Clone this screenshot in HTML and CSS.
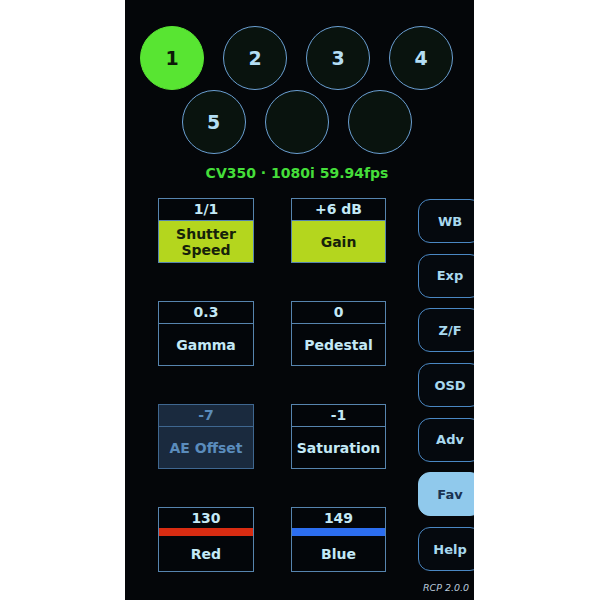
FILE: index.html
```html
<!DOCTYPE html>
<html>
<head>
<meta charset="utf-8">
<link rel="stylesheet" href="styles.css">
</head>
<body>
<div class="panel">
  <div class="cams">
    <div class="cam-row">
      <div class="cam active">1</div>
      <div class="cam">2</div>
      <div class="cam">3</div>
      <div class="cam">4</div>
    </div>
    <div class="cam-row second">
      <div class="cam">5</div>
      <div class="cam"></div>
      <div class="cam"></div>
    </div>
  </div>
  <div class="status">CV350 · 1080i 59.94fps</div>
  <div class="main">
    <div class="tiles">
      <div class="tile hot"><div class="val">1/1</div><div class="lbl">Shutter<br>Speed</div></div>
      <div class="tile hot"><div class="val">+6 dB</div><div class="lbl">Gain</div></div>
      <div class="tile"><div class="val">0.3</div><div class="lbl">Gamma</div></div>
      <div class="tile"><div class="val">0</div><div class="lbl">Pedestal</div></div>
      <div class="tile off"><div class="val">-7</div><div class="lbl">AE Offset</div></div>
      <div class="tile"><div class="val">-1</div><div class="lbl">Saturation</div></div>
      <div class="tile bar"><div class="val">130</div><div class="stripe red"></div><div class="lbl">Red</div></div>
      <div class="tile bar"><div class="val">149</div><div class="stripe blue"></div><div class="lbl">Blue</div></div>
    </div>
    <div class="side">
      <div class="btn">WB</div>
      <div class="btn">Exp</div>
      <div class="btn">Z/F</div>
      <div class="btn">OSD</div>
      <div class="btn">Adv</div>
      <div class="btn sel">Fav</div>
      <div class="btn">Help</div>
      <div class="ver">RCP 2.0.0</div>
    </div>
  </div>
</div>
</body>
</html>
```
FILE: styles.css
```css
html, body {
  margin: 0;
  padding: 0;
  background: #ffffff;
}
body {
  font-family: "DejaVu Sans", "Verdana", sans-serif;
}
.panel {
  margin-left: 125px;
  width: 349px;
  height: 600px;
  background: #040609;
  overflow: hidden;
  display: flex;
  flex-direction: column;
}
.cams {
  padding-top: 26px;
  padding-left: 15px;
  width: 313px;
}
.cam-row {
  display: flex;
  gap: 19px;
}
.cam-row.second {
  justify-content: center;
}
.cam {
  width: 64px;
  height: 64px;
  box-sizing: border-box;
  border-radius: 50%;
  border: 1.5px solid #6a9fd2;
  background: #09130e;
  color: #b4def4;
  font-weight: bold;
  font-size: 19px;
  display: flex;
  align-items: center;
  justify-content: center;
}
.cam.active {
  background: #58e532;
  border-color: #58e532;
  color: #0c1a08;
}
.status {
  margin-top: 10px;
  text-align: center;
  width: 344px;
  color: #45de3a;
  font-weight: bold;
  font-size: 14px;
  line-height: 18px;
}
.main {
  display: flex;
  margin-top: 16px;
  padding-left: 33px;
}
.tiles {
  display: grid;
  grid-template-columns: 96px 95px;
  grid-auto-rows: 65px;
  column-gap: 37px;
  row-gap: 38px;
  align-content: start;
}
.tile {
  box-sizing: border-box;
  border: 1.5px solid #5684ae;
  background: #03060a;
  display: flex;
  flex-direction: column;
  color: #c3e9f6;
  font-weight: bold;
  font-size: 14px;
}
.val {
  height: 21px;
  line-height: 21px;
  text-align: center;
  border-bottom: 1.5px solid #5684ae;
  flex: none;
}
.lbl {
  flex: 1;
  display: flex;
  align-items: center;
  justify-content: center;
  text-align: center;
  line-height: 16px;
}
.tile.hot .lbl {
  background: #b4d61e;
  color: #16220a;
}
.tile.off {
  background: #1a2a3e;
  border-color: #3f6790;
  color: #5a8cbc;
}
.tile.off .val {
  border-bottom-color: #3f6790;
}
.tile.bar .val {
  border-bottom: none;
  height: 20px;
}
.stripe {
  height: 8px;
  flex: none;
}
.stripe.red {
  background: #d82c12;
}
.stripe.blue {
  background: #2c6ef0;
}
.side {
  margin-left: 32px;
  margin-top: 1px;
  display: flex;
  flex-direction: column;
  gap: 10.7px;
  flex: none;
  width: 64px;
}
.btn {
  box-sizing: border-box;
  width: 64px;
  height: 44px;
  border: 1.5px solid #4a87c2;
  border-radius: 12px;
  background: #05090e;
  color: #a9d9ef;
  font-weight: bold;
  font-size: 13px;
  display: flex;
  align-items: center;
  justify-content: center;
}
.btn.sel {
  background: #90c9ec;
  border-color: #90c9ec;
  color: #1a3352;
}
.ver {
  margin-top: 0px;
  padding-left: 5px;
  font-style: italic;
  font-size: 9.5px;
  color: #b9c9da;
  line-height: 12px;
}
```
